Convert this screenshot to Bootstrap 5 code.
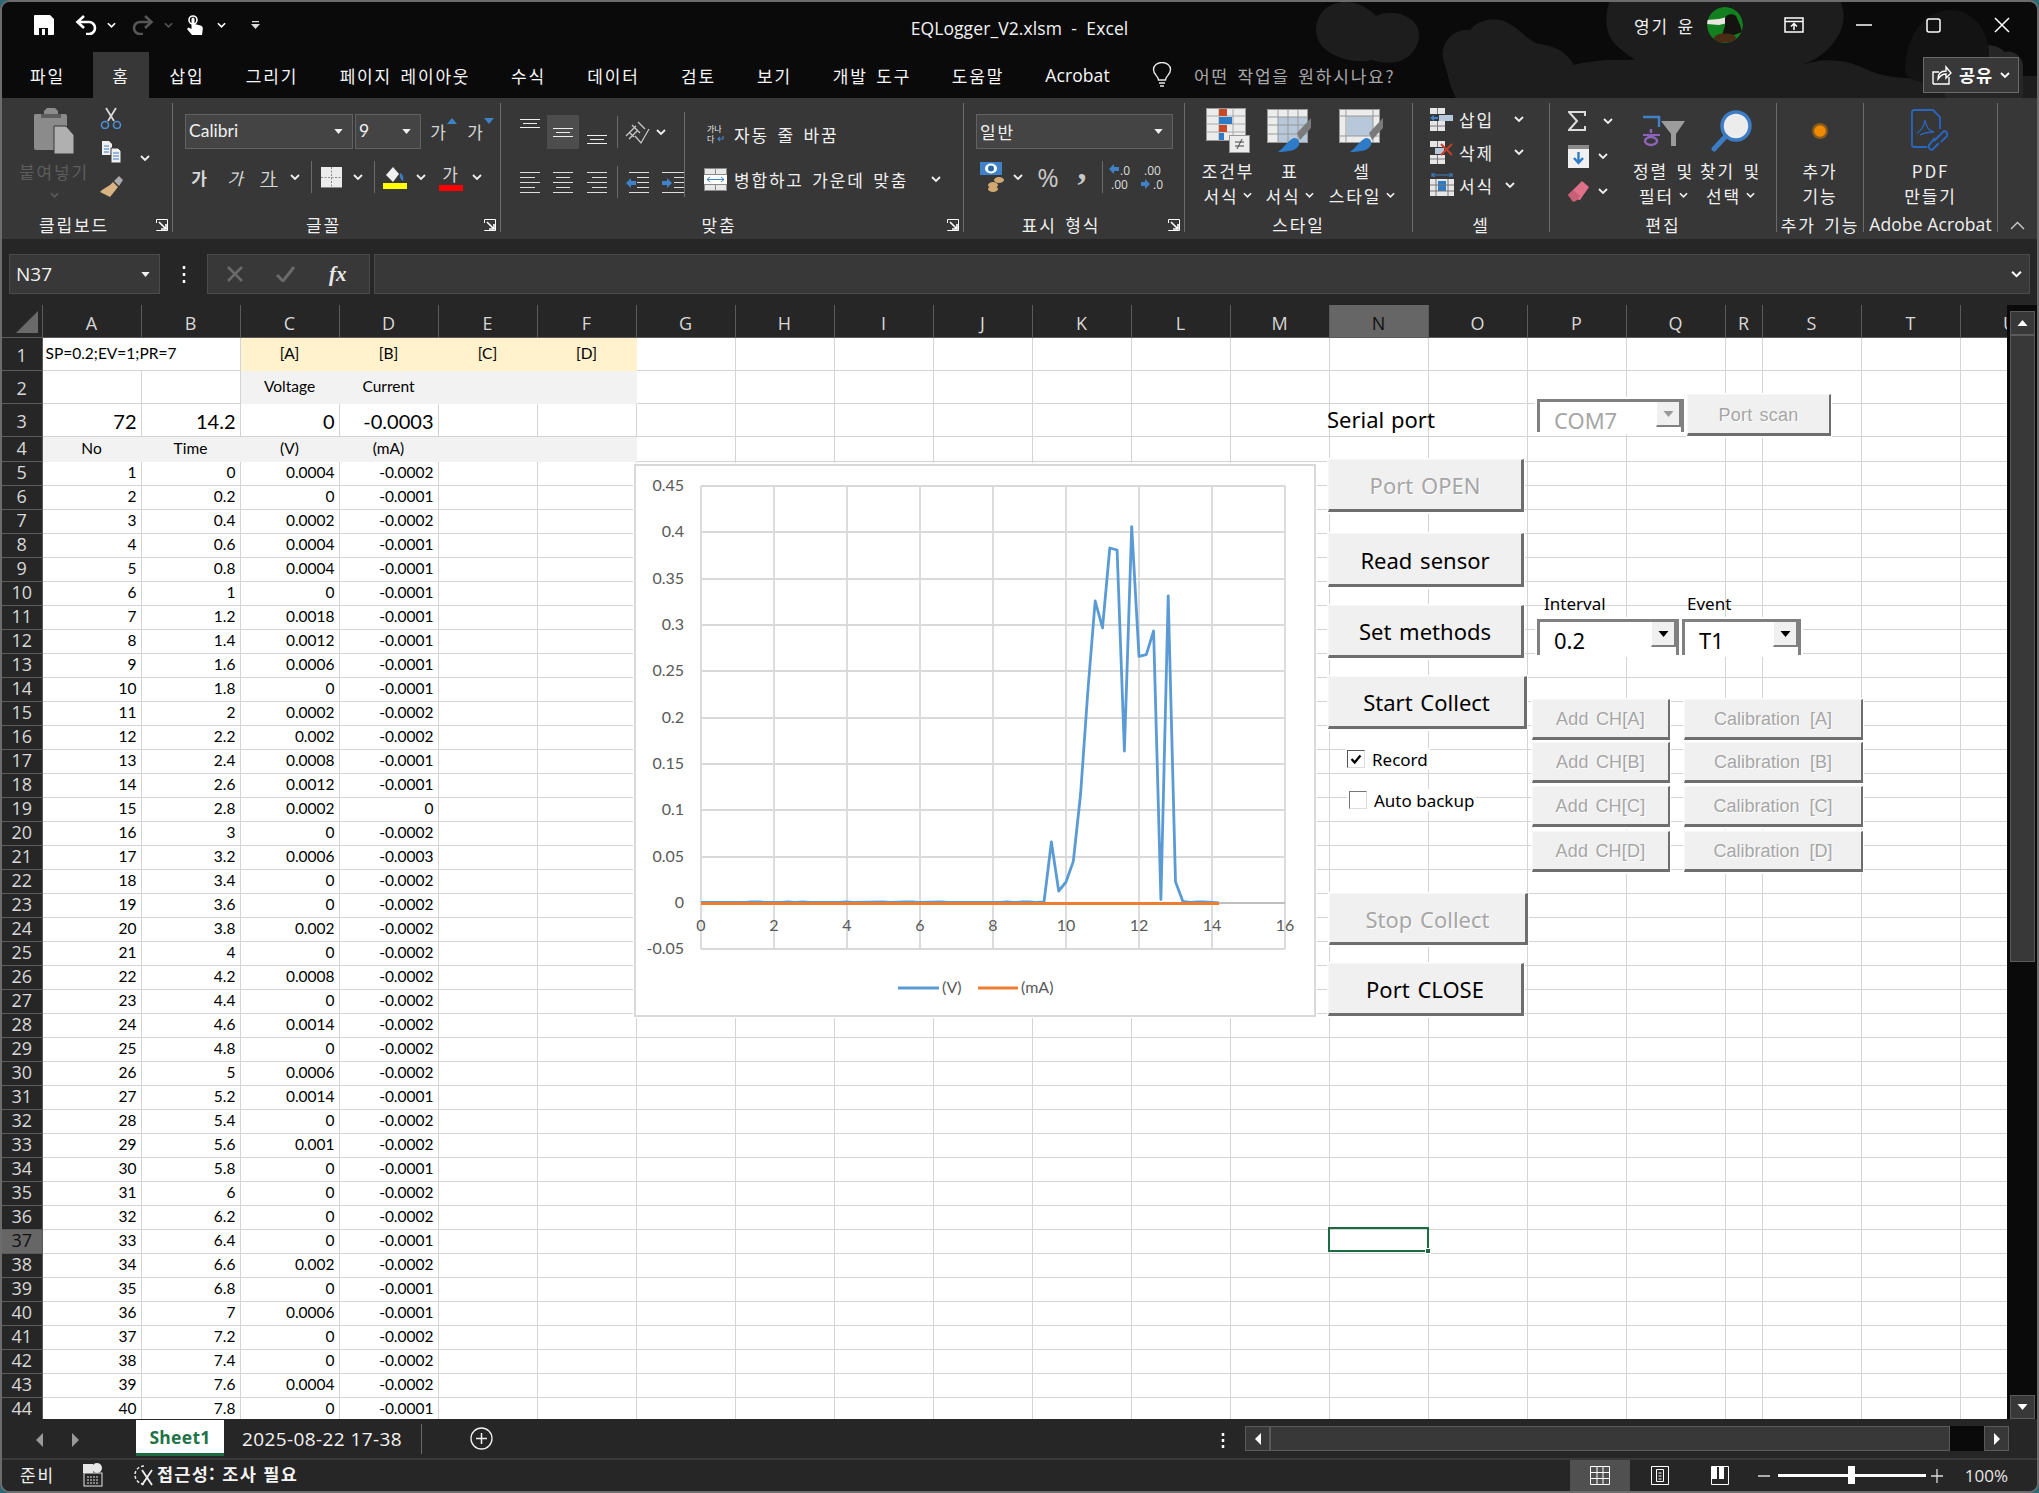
<!DOCTYPE html>
<html lang="ko">
<head>
<meta charset="utf-8">
<title>EQLogger_V2.xlsm - Excel</title>
<link href="https://cdn.jsdelivr.net/npm/bootstrap@5.3.0/dist/css/bootstrap.min.css" rel="stylesheet">
<style>
html,body{height:100%;margin:0;overflow:hidden;background:#2d6a78}
body{font-family:"Open Sans","Noto Sans CJK KR",sans-serif;color:#f0f0f0}
.app{width:2039px;height:1493px;border:2px solid #6c6c6c;border-radius:10px;overflow:hidden;background:#262626;display:flex;flex-direction:column}
.k{font-family:"Noto Sans CJK KR","Noto Sans",sans-serif;font-size:17px;letter-spacing:1.8px;word-spacing:2px;line-height:25px;white-space:nowrap}
.top{position:relative;background:#0a0a0a;height:96px;flex:none}
.blobs{position:absolute;left:-2px;top:-2px}
.tbar{position:relative;height:50px;display:grid;grid-template-columns:1fr auto 1fr;align-items:center}
.qat{display:grid;grid-template-columns:31px 11px 32px 18px 2px 42px 8px 46px 6px 62px;align-items:center;justify-items:center;height:50px;padding:0 0 4px 26px;justify-self:start}
.title{font-size:17.6px;color:#f2f2f2;line-height:1;padding-top:4px;letter-spacing:.1px}
.tright{display:grid;grid-template-columns:auto 60px 78px 62px 76px 62px;justify-items:center;align-items:center;justify-self:end;padding-bottom:4px;margin-right:4px}
.avatar{border-radius:50%}
.tabsrow{position:relative;height:46px;display:flex;align-items:stretch}
.tabs{display:grid;grid-template-columns:91px 56px 76px 94px 172px 75px 95px 75px 77px 118px 94px 105px}
.tabs .tab{display:flex;align-items:center;justify-content:center;color:#f6f6f6;text-decoration:none;padding-bottom:0}
.tabs .tab.active{background:#373737}
.tab.lat,.lat{font-family:"Open Sans",sans-serif;font-size:17.5px;letter-spacing:.1px}
.bulb{margin-left:22px;display:flex;align-items:center}
.tell{margin-left:22px;color:#a8a8a8;display:flex;align-items:center}
.share{position:absolute;left:1921px;top:5px;width:96px;height:36px;background:#383838;border:1px solid #6a6a6a;color:#fff;display:flex;align-items:center;justify-content:center;gap:7px;padding:0;border-radius:0}
.share b{font-family:"Noto Sans CJK KR",sans-serif;font-size:17.5px;font-weight:700;letter-spacing:1px;color:#fff}
.ribbon{height:141px;background:#373737;padding:5px 0 7px;display:flex;flex:none}
.rg{display:flex;flex-direction:column;height:129px;border-right:1px solid #6b6b6b;flex:none;position:relative}
.rb{height:114px;display:flex;flex:none}
.rc{height:15px;text-align:center;display:flex;justify-content:center;align-items:center;position:relative;color:#f0f0f0;white-space:nowrap}
.rc.hl{padding-right:26px}
.launch{position:absolute;right:4px;top:2px}
.g-clip{width:171px}.g-font{width:328px}.g-align{width:463px}.g-num{width:221px}.g-style{width:228px}.g-cell{width:137px}.g-edit{width:227px}.g-add{width:87px}.g-acr{width:134px}
.paste{width:88px;padding-left:8px;display:flex;flex-direction:column;align-items:center;padding-top:5px;box-sizing:content-box;color:#5d5d5d}
.paste .k{margin-top:5px}
.clipsm{width:26px;display:flex;flex-direction:column;align-items:center;padding-top:4px;gap:12px}
.fbox{height:35px;background:#444;border:1px solid #626262;display:flex;align-items:center;justify-content:space-between;padding:0 9px 0 3px;color:#f0f0f0}
.cal{font-family:Lato,sans-serif;font-size:17.5px}
.frow1{display:grid;grid-template-columns:168px 2px 66px 7px 22px 15px 22px;padding:11px 0 0 12px;align-items:center;justify-items:stretch}
.frow2{display:grid;grid-template-columns:36px 36px 30px 22px 10px 30px 24px 8px 34px 18px 42px 10px;padding:12px 0 0 9px;align-items:center;justify-items:center;height:42px}
.vs{width:1px;background:#6b6b6b;height:32px}
.ga{position:relative;color:#d6d6d6;text-align:center}
.ga svg{position:absolute;right:-7px;top:-1px}
.colb{display:flex;flex-direction:column}
.al-l{width:183px;padding:12px 0 0 11px;flex:none}
.arow1{display:grid;grid-template-columns:35px 32px 36px 4px 36px 12px;height:34px;align-items:center;justify-items:center}
.arow2{display:grid;grid-template-columns:35px 32px 36px 4px 36px 36px;height:34px;align-items:center;justify-items:center;margin-top:16px}
.sel-al{background:#4d4d4d;width:32px;height:34px;display:flex;align-items:center;justify-content:center;padding-top:2px}
.vlong{width:1px;height:85px;background:#6b6b6b;margin-top:9px;flex:none}
.al-r{padding:19px 0 0 19px;flex:1}
.wrap1{display:flex;align-items:center;gap:7px;height:24px;padding-left:3px}
.wrap2{display:flex;align-items:center;gap:7px;height:28px;margin-top:19px}
.numbox{margin:11px 0 0 12px;width:197px}
.nrow{display:grid;grid-template-columns:32px 20px 40px 28px 12px 32px 32px;padding:12px 0 0 12px;align-items:center;justify-items:center;height:44px}
.pct{font-size:26px;color:#c8c8c8;line-height:1}
.cma{font-family:"Liberation Serif",serif;font-weight:700;font-size:36px;color:#c8c8c8;line-height:0;padding-bottom:20px}
.big{display:flex;flex-direction:column;align-items:center;flex:none}
.big .ic{height:55px;display:flex;align-items:center;justify-content:center}
.big .k{display:flex;align-items:center;justify-content:center;gap:5px}
.c62{width:62px}.c82{width:82px}.c67{width:67px}
.pl12{padding-left:12px}
.cellcol{padding:0 0 0 17px;width:100%}
.crow{display:flex;align-items:center;height:33px;gap:5px}
.crow .ch{margin-left:auto;margin-right:25px}
.crow .ch2{margin-left:6px}
.edcol{width:68px;padding-left:6px;display:flex;flex-direction:column;gap:9px;padding-top:5px}
.edr{display:flex;align-items:center;gap:9px;height:26px}
.col-fill{flex:1;display:flex;align-items:flex-end;justify-content:center;padding-bottom:2px}
.fbar{height:66px;background:#262626;padding-top:15px;display:flex;flex:none}
.namebox{width:151px;height:40px;margin-left:7px;background:#383838;border:1px solid #4a4a4a;display:flex;align-items:center;justify-content:space-between;padding:0 9px 0 6px;font-size:19px;color:#f0f0f0}
.vdots{width:47px;display:flex;align-items:center;justify-content:center;height:40px}
.fxbox{width:163px;height:40px;background:#383838;border:1px solid #4a4a4a;display:flex;align-items:center;padding-left:19px;gap:33px}
.fx{font-family:"Liberation Serif",serif;font-style:italic;font-weight:700;font-size:21px;color:#e8e8e8;line-height:1}
.finput{width:1656px;height:40px;margin-left:4px;background:#383838;border:1px solid #4a4a4a;display:flex;align-items:center;justify-content:flex-end;padding-right:7px}
.sarea{display:flex;height:1114px;flex:none}
.sheetwrap{position:relative;width:2005px;height:1114px;overflow:hidden;background:#fff;flex:none}
.vscroll{width:30px;display:flex;flex-direction:column;align-items:center;background:#0a0a0a;padding-top:6px;flex:none}
.vb{width:25px;height:24px;background:#383838;border:1px solid #5a5a5a;display:flex;align-items:center;justify-content:center;flex:none}
.vthumb{width:25px;height:627px;background:#383838;border:1px solid #5a5a5a;flex:none}
.vsp{flex:1}
.sheet{table-layout:fixed;border-collapse:collapse;width:2057px;font-family:Lato,sans-serif;font-size:15.5px;color:#000}
.sheet td{border-right:1px solid #d4d4d4;border-bottom:1px solid #d4d4d4;padding:0 4px;white-space:nowrap;overflow:hidden;background:#fff;line-height:1;text-align:right}
.sheet th{background:#262626;color:#d8d8d8;font-family:"Open Sans",sans-serif;font-weight:400;font-size:18px;text-align:center;padding:0;border-bottom:1px solid #5a5a5a;border-right:1px solid #5a5a5a;line-height:1.2}
.sheet thead th{height:32px;padding-top:6px;border-right:1px solid #5a5a5a}
.sheet thead th.sel,.sheet tbody th.sel{background:#666;color:#111}
.sheet thead th:first-child{padding:0;vertical-align:bottom;text-align:right}
.sheet .h33{height:33px}.sheet .h25{height:25px}.sheet .h24{height:24px}
.sheet .h33 th{padding-top:4px}
.sheet td.l{text-align:left;padding-left:3px}
.sheet td.c{text-align:center}
.sheet td.y{background:#fff2cc;border-color:#fff2cc}
.sheet td.g{background:#f2f2f2;border-color:#f2f2f2}
.sheet td.big3{font-size:20px;vertical-align:bottom;padding-bottom:5px}
.canvas{position:absolute;left:-2px;top:-305px;width:0;height:0}
.chart{position:absolute;left:634px;top:464px;width:682px;height:553px;background:#fff;border:2px solid #d9d9d9;box-sizing:border-box;box-shadow:0 0 0 1px #fff}
.chart svg{position:absolute;left:-2px;top:-2px;font-family:Lato,sans-serif}
.xb{position:absolute;display:flex;align-items:center;justify-content:center;border-radius:0;padding:1px 0 0;background:#f0f0f0;border:0;border-right:3px solid #6e6e6e;border-bottom:3px solid #6e6e6e;border-top:1px solid #f7f7f7;border-left:1px solid #f7f7f7;box-shadow:-1px 3px 0 -1px #fff,0 0 0 1px #fff;font-family:"Noto Sans",sans-serif;color:#000;line-height:1;white-space:nowrap;word-spacing:2px;opacity:1!important}
.xb.lg{font-size:22px}
.xb.sm{font-family:"Liberation Sans",sans-serif;font-size:18px;letter-spacing:.2px;color:#a6a6a6;text-shadow:1px 1px 0 #fff;border-right-width:2px;border-bottom-width:3px}
.xb.off{color:#a6a6a6;text-shadow:1px 1px 0 #fff}
.b-open{left:1328px;top:459px;width:196px;height:53px}
.b-read{left:1328px;top:533px;width:196px;height:54px}
.b-set{left:1328px;top:605px;width:196px;height:53px}
.b-start{left:1328px;top:676px;width:199px;height:53px}
.b-stop{left:1329px;top:893px;width:199px;height:52px}
.b-close{left:1328px;top:963px;width:196px;height:53px}
.b-scan{left:1687px;top:394px;width:144px;height:42px}
.addc{left:1532px;width:138px;height:41px}
.xb.calc{left:1684px;width:179px;height:41px;letter-spacing:0;word-spacing:5px}
.r1{top:699px}.r2{top:742px}.r3{top:786px}.r4{top:831px}
.lbl{position:absolute;font-family:"Noto Sans",sans-serif;color:#000;white-space:nowrap;line-height:1}
.l-serial{left:1327px;top:408px;font-size:22px;word-spacing:1px}
.l-int{left:1544px;top:595px;font-size:17px}
.l-evt{left:1687px;top:595px;font-size:17px}
.combo{position:absolute;background:#fff;color:#000;border:3px solid #808080;border-bottom:0;display:flex;justify-content:space-between;font-family:"Noto Sans",sans-serif;font-size:22px;line-height:1;box-shadow:0 0 0 2px #fff}
.combo span{padding:7px 0 0 14px}
.combo i{display:flex;align-items:center;justify-content:center;width:25px;height:25px;background:#f0f0f0;border-right:2px solid #808080;border-bottom:2px solid #808080;border-left:1px solid #fff;flex:none}
.combo.c-com{left:1537px;top:399px;width:147px;height:33px;color:#a6a6a6}
.c-int{left:1537px;top:619px;width:142px;height:36px}
.c-evt{left:1682px;top:619px;width:119px;height:36px}
.ck{position:absolute;display:flex;align-items:center;gap:7px;font-family:"Noto Sans",sans-serif;font-size:17px;color:#000;line-height:1;white-space:nowrap;background:#fff;box-shadow:0 0 0 2px #fff;margin:0;padding:0}
.ck .form-check-input{width:18px;height:18px;margin:0;border-radius:0;border:1px solid #777;border-right-color:#ddd;border-bottom-color:#ddd;float:none;flex:none;background-color:#fff}
.ck .form-check-input:checked{background-color:#fff;border-color:#555 #ddd #ddd #555;background-image:url("data:image/svg+xml,%3csvg xmlns='http://www.w3.org/2000/svg' viewBox='0 0 18 18'%3e%3cpath d='M4 9l3.5 4L14 5' fill='none' stroke='%23000' stroke-width='2.6'/%3e%3c/svg%3e");background-size:100%}
.ck-rec{left:1347px;top:750px}
.ck-auto{left:1349px;top:791px}
.selbox{position:absolute;left:1328px;top:1227px;width:101px;height:25px;border:2px solid #1d6b43}
.selbox::after{content:"";position:absolute;right:-4px;bottom:-4px;width:6px;height:6px;background:#1d6b43;border:1px solid #fff}
.tabbar{height:39px;display:flex;align-items:flex-start;background:#262626;border-top:1px solid #262626;flex:none;position:relative}
.tnav{width:134px;display:grid;grid-template-columns:36px 37px;padding:13px 0 0 19px;justify-items:center}
.stab{width:88px;height:36px;background:#fff;border-bottom:3px solid #1d6b43;color:#217346;font-family:"Open Sans",sans-serif;font-weight:700;font-size:17.5px;display:flex;align-items:center;justify-content:center;letter-spacing:.3px;padding-top:2px}
.stab2{font-size:19px;padding:1px 0 0 18px;color:#f4f4f4;font-family:"Open Sans",sans-serif;white-space:nowrap;letter-spacing:.4px;width:198px;border-right:1px solid #6a6a6a;height:30px;margin-top:4px}
.plus{margin-left:48px;margin-top:7px}
.tdots{position:absolute;left:1219px;top:13px}
.hsc{position:absolute;left:1243px;top:6px;display:flex;height:25px}
.hb{width:25px;background:#383838;border:1px solid #5a5a5a;display:flex;align-items:center;justify-content:center}
.hthumb{width:680px;background:#383838;border:1px solid #5a5a5a}
.hblack{width:34px;background:#0a0a0a}
.status{flex:1;display:flex;align-items:stretch;background:#262626;border-top:2px solid #3a3a3a;position:relative}
.st-l{display:flex;align-items:center;padding-left:18px;padding-bottom:2px}
.st-l .acc{font-family:"Noto Sans CJK KR",sans-serif;font-weight:700;font-size:17.5px;letter-spacing:1.3px;color:#f4f4f4;margin-left:3px;white-space:nowrap}
.mac{margin:0 31px 0 28px}
.st-r{margin-left:auto;display:flex;align-items:center}
.vbtn{width:60px;height:100%;display:flex;align-items:center;justify-content:center}
.vbtn.on{background:#505050}
.zoom{display:flex;align-items:center;position:relative}
.zline{width:148px;height:3px;background:#fff;margin:0 5px 0 8px;position:relative}
.zline::after{content:"";position:absolute;left:70px;top:-8px;width:7px;height:18px;background:#fff}
.zpct{font-size:17px;color:#e6e6e6;margin:0 29px 0 22px}
</style>
</head>
<body>
<svg width="0" height="0" class="position-absolute">
<defs>
<symbol id="chev" viewBox="0 0 10 7"><path d="M1 1l4 4 4-4" fill="none" stroke="currentColor" stroke-width="1.8"/></symbol>
<symbol id="launch" viewBox="0 0 12 12"><path d="M.5.5h11v11H.5z" fill="none" stroke="#fff"/><path d="M0 0h7v3H3v8H0z" fill="#373737"/><path d="M.5 4V.5H7" fill="none" stroke="#fff"/><path d="M3 3l7 7M10 5v5H5" fill="none" stroke="#fff" stroke-width="1.6"/></symbol>
<symbol id="caret" viewBox="0 0 10 6"><path d="M0 0h10L5 6z" fill="currentColor"/></symbol>
</defs>
</svg>
<div class="app">
  <div class="top">
    <svg class="blobs" width="2039" height="98" viewBox="0 0 2039 98">
      <g fill="#1d1d1d">
        <path d="M1316 30c0-18 14-28 30-28 12 0 22 6 30 14 12-6 28-4 38 6 10 12 4 28-8 36-10 6-22 6-34 2-8 2-20 2-30-2-14-4-26-14-26-28z"/>
        <path d="M1444 62c-6-16 8-34 26-32 8-10 24-14 36-8 14 6 22 20 34 22 14 2 28 8 34 22 6 14 0 30-6 32h-112c-6-10-8-24-12-36z"/>
        <path d="M1518 78c40-8 80-24 120-16-10-8-26-16-30-30-4-14 0-26 2-32h230c6 14 4 26-2 36-8 14-22 24-34 28 16 10 10 22-8 22-20 2-34-6-50-4-16 0-34 12-228 16z"/>
        <path d="M1518 80c50-14 110-26 150-18 40 8 80 22 130 4 30-10 50-6 70 4 30 14 70 6 170 6v22H1518z"/>
        <path d="M1945 74c0-16 14-26 28-24 8-8 24-6 32 2 8-2 16 4 18 12v34h-78z" fill="#262626"/>
      </g>
      <path d="M1905 70c0-34 20-60 46-60 24 0 38 24 38 44 0 18-20 30-44 30s-40-4-40-14z" fill="#131313"/>
    </svg>
    <div class="tbar">
      <div class="qat">
        <svg width="20" height="20" viewBox="0 0 20 20"><path d="M0 1a1 1 0 0 1 1-1h15l4 4v15a1 1 0 0 1-1 1H1a1 1 0 0 1-1-1z" fill="#fff"/><path d="M5 13h9v7H5z" fill="#0a0a0a"/><path d="M8 14h3v6H8z" fill="#fff"/></svg>
        <span></span>
        <svg width="22" height="20" viewBox="0 0 22 20"><path d="M3 7h11a6 6 0 0 1 0 12h-3" fill="none" stroke="#fff" stroke-width="2.6"/><path d="M9 1L2.5 7 9 13" fill="none" stroke="#fff" stroke-width="2.6"/></svg>
        <svg width="9" height="7" class="text-white"><use href="#chev"/></svg>
        <span></span>
        <svg width="22" height="20" viewBox="0 0 22 20"><path d="M19 7H8a6 6 0 0 0 0 12h3" fill="none" stroke="#555" stroke-width="2.6"/><path d="M13 1l6.5 6L13 13" fill="none" stroke="#555" stroke-width="2.6"/></svg>
        <svg width="9" height="7" style="color:#555"><use href="#chev"/></svg>
        <svg width="18" height="21" viewBox="0 0 18 21"><circle cx="7" cy="5" r="4" fill="none" stroke="#fff" stroke-width="1.6"/><path d="M5.5 4a1.5 1.5 0 0 1 3 0v5l6 1.5c2 .5 2.500 2 2.300 3.500L16 20H6L1 14l1.500-1.500L5.500 14z" fill="#fff"/></svg>
        <svg width="9" height="7" class="text-white"><use href="#chev"/></svg>
        <svg width="9" height="9" viewBox="0 0 9 9"><path d="M1 0h7v1.300H1z" fill="#ddd"/><path d="M0 3h9L4.500 8z" fill="#ddd"/></svg>
      </div>
      <div class="title lat">EQLogger_V2.xlsm&nbsp; -&nbsp; Excel</div>
      <div class="tright">
        <span class="k">영기 윤</span>
        <svg class="avatar" width="36" height="36" viewBox="0 0 36 36"><circle cx="18" cy="18" r="18" fill="#12801f"/><path d="M0 13l12-1 12-3 1 6-13 3-12-1z" fill="#e8e6de"/><path d="M18 11c1-4 8-5 11-2l4 9 2 7-8 3-12 0 3-9z" fill="#15130f"/><ellipse cx="18" cy="31" rx="11" ry="4.500" fill="#4a2c14"/></svg>
        <svg width="20" height="16" viewBox="0 0 20 16"><path d="M1 1h18v14H1zM1 4.500h18" fill="none" stroke="#fff" stroke-width="1.500"/><path d="M10 13V7M7 9.500l3-3 3 3" fill="none" stroke="#fff" stroke-width="1.500"/></svg>
        <svg width="16" height="2"><path d="M0 1h16" stroke="#fff" stroke-width="1.500"/></svg>
        <svg width="15" height="15"><rect x="1" y="1" width="13" height="13" rx="2" fill="none" stroke="#fff" stroke-width="1.500"/></svg>
        <svg width="16" height="16"><path d="M1 1l14 14M15 1L1 15" stroke="#fff" stroke-width="1.500"/></svg>
      </div>
    </div>
    <div class="tabsrow">
      <nav class="tabs nav">
        <a class="tab k" href="#">파일</a><a class="tab k active" href="#">홈</a><a class="tab k" href="#">삽입</a><a class="tab k" href="#">그리기</a><a class="tab k" href="#">페이지 레이아웃</a><a class="tab k" href="#">수식</a><a class="tab k" href="#">데이터</a><a class="tab k" href="#">검토</a><a class="tab k" href="#">보기</a><a class="tab k" href="#">개발 도구</a><a class="tab k" href="#">도움말</a><a class="tab lat" href="#">Acrobat</a>
      </nav>
      <div class="bulb"><svg width="20" height="26" viewBox="0 0 20 26"><path d="M6.500 18c0-4-5-5-5-10.500a8.500 7 0 0 1 17 0C18.500 13 13.500 14 13.500 18z" fill="none" stroke="#e8e8e8" stroke-width="1.400"/><path d="M7 21h6M8 24h4" stroke="#e8e8e8" stroke-width="1.600"/></svg></div>
      <div class="tell k">어떤 작업을 원하시나요?</div>
      <button class="share btn" type="button"><svg width="20" height="20" viewBox="0 0 20 20"><path d="M1 19V7h6M17 12v7H1" fill="none" stroke="#fff" stroke-width="1.400"/><path d="M6 14c0-5 3-8 8-8V2l5 6-5 5V9c-4 0-6 2-8 5z" fill="none" stroke="#fff" stroke-width="1.400"/></svg><b>공유</b><svg width="10" height="7"><use href="#chev"/></svg></button>
    </div>
  </div>

  <div class="ribbon">
    <div class="rg g-clip">
      <div class="rb">
        <div class="paste">
          <svg width="42" height="46" viewBox="0 0 42 46"><path d="M1 6h10V3l3-3h8l3 3v3h7a2 2 0 0 1 2 2v32a2 2 0 0 1-2 2H3a2 2 0 0 1-2-2V8a2 2 0 0 1 1-2z" fill="#8b8b8b"/><path d="M8 6h20v4H8z" fill="#5e5e5e"/><path d="M21 18h12l8 9v19H21z" fill="#b0b0b0" stroke="#373737" stroke-width="1"/></svg>
          <span class="k">붙여넣기</span>
          <svg width="9" height="7" class="mt-2"><use href="#chev"/></svg>
        </div>
        <div class="clipsm">
          <svg width="22" height="22" viewBox="0 0 22 22"><path d="M6 1l8 13M16 1L8 14" stroke="#d8d8d8" stroke-width="1.800" fill="none"/><circle cx="5" cy="18" r="3.500" fill="none" stroke="#4a8fd8" stroke-width="1.600"/><circle cx="17" cy="18" r="3.500" fill="none" stroke="#4a8fd8" stroke-width="1.600"/></svg>
          <svg width="21" height="23" viewBox="0 0 21 23"><path d="M1 0h7l3 3v11H1z" fill="#f0f0f0"/><path d="M10 7h7l3 3v12H10z" fill="#f0f0f0" stroke="#373737"/><path d="M3 5h5M3 8h5M3 11h5" stroke="#3a7cc2" stroke-width="1"/><path d="M12 12h6M12 15h6M12 18h6" stroke="#3a7cc2" stroke-width="1"/></svg>
          <svg width="24" height="21" viewBox="0 0 24 21"><path d="M14 6l5 5-8 10L1 16l2-2 8-5z" fill="#d9b482"/><path d="M15 5l5-5 4 4-4 6z" fill="#aaa"/></svg>
        </div>
        <div class="d-flex align-items-start pt-5 ms-3"><svg width="10" height="7" class="mt-1"><use href="#chev"/></svg></div>
      </div>
      <div class="rc hl k"><span>클립보드</span><svg class="launch" width="12" height="12"><use href="#launch"/></svg></div>
    </div>

    <div class="rg g-font">
      <div class="rb colb">
        <div class="frow1">
          <div class="fbox"><span class="cal">Calibri</span><svg width="9" height="5"><use href="#caret"/></svg></div><span></span>
          <div class="fbox"><span class="cal">9</span><svg width="9" height="5"><use href="#caret"/></svg></div><span></span>
          <span class="k ga">가<svg width="10" height="6"><path d="M0 6l5-6 5 6z" fill="#3f82c8"/></svg></span><span></span>
          <span class="k ga">가<svg width="10" height="6"><path d="M0 0l5 6 5-6z" fill="#3f82c8"/></svg></span>
        </div>
        <div class="frow2">
          <span class="k ga fw-bold">가</span><span class="k ga fst-italic">가</span><span class="k ga"><u>가</u></span>
          <svg width="10" height="7"><use href="#chev"/></svg><span class="vs"></span>
          <svg width="21" height="21" viewBox="0 0 21 21"><rect width="21" height="21" fill="#ececec"/><path d="M10.500 0v21M0 10.500h21" stroke="#8a8a8a" stroke-dasharray="2 1.500"/><path d="M0 20.500h21" stroke="#888"/></svg>
          <svg width="10" height="7"><use href="#chev"/></svg><span class="vs"></span>
          <svg width="24" height="24" viewBox="0 0 24 24"><path d="M10 2L3 10l7 7 6-8z" fill="#f0f0f0"/><path d="M17 8c3 1 4 5 3 8-2-1-4-4-3-8z" fill="#3a7cc2"/><rect y="18" width="24" height="6" fill="#ffff00"/></svg>
          <svg width="10" height="7"><use href="#chev"/></svg>
          <span class="d-flex flex-column align-items-center"><span class="k ga lh-sm">가</span><svg width="24" height="6"><rect width="24" height="6" fill="#ff0000"/></svg></span>
          <svg width="10" height="7"><use href="#chev"/></svg>
        </div>
      </div>
      <div class="rc hl k"><span>글꼴</span><svg class="launch" width="12" height="12"><use href="#launch"/></svg></div>
    </div>

    <div class="rg g-align">
      <div class="rb">
        <div class="al-l">
          <div class="arow1">
            <svg class="align-self-start mt-1" width="20" height="10"><path d="M0 .5h20M3 4.500h14M0 8.500h20" stroke="#ededed"/></svg>
            <span class="sel-al"><svg width="20" height="10"><path d="M0 .5h20M3 4.500h14M0 8.500h20" stroke="#ededed"/></svg></span>
            <svg class="align-self-end mb-1" width="20" height="10"><path d="M0 .5h20M3 4.500h14M0 8.500h20" stroke="#ededed"/></svg>
            <span class="vs"></span>
            <svg width="26" height="26" viewBox="0 0 26 26"><path d="M2 17l10-10M5 20l9-9M8 6l8 8M14 3l7 7M5 13l5 5M11 17l6 7 8-14" fill="none" stroke="#c8c8c8" stroke-width="1.300"/></svg>
            <svg width="10" height="7"><use href="#chev"/></svg>
          </div>
          <div class="arow2">
            <svg width="20" height="21"><path d="M0 .5h20M0 5.500h15M0 10.500h20M0 15.500h15M0 20.500h20" stroke="#dedede"/></svg>
            <svg width="20" height="21"><path d="M0 .5h20M3 5.500h14M0 10.500h20M3 15.500h14M0 20.500h20" stroke="#dedede"/></svg>
            <svg width="20" height="21"><path d="M0 .5h20M5 5.500h15M0 10.500h20M5 15.500h15M0 20.500h20" stroke="#dedede"/></svg>
            <span class="vs"></span>
            <svg width="23" height="21"><path d="M3 .5h20M11 5.500h12M11 10.500h12M11 15.500h12M3 20.500h20" stroke="#dedede"/><path d="M0 11l5-5v3h5v4H5v3z" fill="#3f82c8"/></svg>
            <svg width="23" height="21"><path d="M0 .5h22M12 5.500h11M12 10.500h11M12 15.500h11M0 20.500h22" stroke="#dedede"/><path d="M10 11L5 6v3H0v4h5v3z" fill="#3f82c8"/></svg>
          </div>
        </div>
        <div class="vlong"></div>
        <div class="al-r">
          <div class="wrap1">
            <svg width="20" height="20" viewBox="0 0 20 20" overflow="visible"><text x="0" y="8" font-size="8" fill="#eee" font-family="Noto Sans CJK KR">가나</text><text x="0" y="18" font-size="8" fill="#eee" font-family="Noto Sans CJK KR">다</text><path d="M16 12v3h-5M13 13l-2 2 2 2" fill="none" stroke="#3f82c8" stroke-width="1.200"/></svg>
            <span class="k">자동 줄 바꿈</span>
          </div>
          <div class="wrap2">
            <svg width="23" height="23" viewBox="0 0 23 23"><rect x=".5" y=".5" width="22" height="22" fill="#e8e8e8" stroke="#8a8a8a"/><path d="M0 6.500h23M0 16.500h23M11.500 0v6M11.500 17v6" stroke="#8a8a8a"/><rect y="7" width="23" height="9" fill="#fff"/><path d="M3 11.500h17M6 9l-3 2.500L6 14M17 9l3 2.500L17 14" fill="none" stroke="#3f82c8"/></svg>
            <span class="k">병합하고 가운데 맞춤</span>
            <svg class="ms-3" width="10" height="7"><use href="#chev"/></svg>
          </div>
        </div>
      </div>
      <div class="rc hl k"><span>맞춤</span><svg class="launch" width="12" height="12"><use href="#launch"/></svg></div>
    </div>

    <div class="rg g-num">
      <div class="rb colb">
        <div class="fbox numbox"><span class="k">일반</span><svg width="9" height="5"><use href="#caret"/></svg></div>
        <div class="nrow">
          <svg width="24" height="30" viewBox="0 0 24 30"><rect width="22" height="13" fill="#3f82c8"/><ellipse cx="11" cy="6.500" rx="6" ry="5" fill="#fff"/><circle cx="11" cy="6.500" r="3" fill="#2a68a8"/><g fill="#d0a870"><ellipse cx="19" cy="18" rx="5" ry="3"/><ellipse cx="13" cy="23" rx="5" ry="3"/><ellipse cx="13" cy="27" rx="5" ry="3"/></g></svg>
          <svg width="10" height="7"><use href="#chev"/></svg>
          <span class="pct">%</span>
          <span class="cma">,</span>
          <span class="vs"></span>
          <svg width="30" height="28" viewBox="0 0 30 28" overflow="visible" font-family="Open Sans" font-size="12" fill="#ddd"><path d="M0 6l5-5v3h5v4H5v3z" fill="#3f82c8"/><text x="11" y="12">.0</text><text x="2" y="26">.00</text></svg>
          <svg width="30" height="28" viewBox="0 0 30 28" overflow="visible" font-family="Open Sans" font-size="12" fill="#ddd"><text x="3" y="12">.00</text><path d="M9 21l-5-5v3H0v4h4v3z" fill="#3f82c8"/><text x="12" y="26">.0</text></svg>
        </div>
      </div>
      <div class="rc hl k"><span>표시 형식</span><svg class="launch" width="12" height="12"><use href="#launch"/></svg></div>
    </div>

    <div class="rg g-style">
      <div class="rb pl12">
        <div class="big c62">
          <div class="ic"><svg width="44" height="46" viewBox="0 0 44 46"><rect x=".5" y=".5" width="39" height="32" fill="#ececec" stroke="#999"/><path d="M13 0v33M27 0v33M0 8h40M0 16h40M0 24h40" stroke="#aaa"/><rect x="13" y="1" width="8" height="7" fill="#c8492a"/><rect x="13" y="9" width="13" height="7" fill="#2e7cc8"/><rect x="13" y="17" width="8" height="7" fill="#c8492a"/><rect x="13" y="25" width="5" height="7" fill="#2e7cc8"/><rect x="23.500" y="27.500" width="20" height="17" fill="#ececec" stroke="#999"/><path d="M29 34h9M29 38h9M36 31l-5 10" stroke="#444" fill="none"/></svg></div>
          <div class="k">조건부</div><div class="k">서식<svg width="9" height="7"><use href="#chev"/></svg></div>
        </div>
        <div class="big c62">
          <div class="ic"><svg width="46" height="44" viewBox="0 0 46 44"><rect x=".5" y=".5" width="40" height="33" fill="#ececec" stroke="#999"/><rect x="11" y="8" width="29" height="25" fill="#b6c8da"/><path d="M11 0v33M21 0v33M31 0v33M0 8h40M0 16h40M0 25h40" stroke="#999"/><path d="M30 24l14-15v10L33 31z" fill="#7a7a7a"/><path d="M11 43c6-4 10-12 16-14 4 0 6 3 5 7-2 5-10 7-21 7z" fill="#2e7cc8"/></svg></div>
          <div class="k">표</div><div class="k">서식<svg width="9" height="7"><use href="#chev"/></svg></div>
        </div>
        <div class="big c82">
          <div class="ic"><svg width="46" height="44" viewBox="0 0 46 44"><rect x=".5" y=".5" width="40" height="33" fill="#ececec" stroke="#999"/><rect x="8" y="7" width="26" height="20" fill="#b6c8da"/><path d="M7 0v33M34 0v33M0 7h40M0 27h40" stroke="#999"/><path d="M30 24l14-15v10L33 31z" fill="#7a7a7a"/><path d="M11 43c6-4 10-12 16-14 4 0 6 3 5 7-2 5-10 7-21 7z" fill="#2e7cc8"/></svg></div>
          <div class="k">셀</div><div class="k">스타일<svg width="9" height="7"><use href="#chev"/></svg></div>
        </div>
      </div>
      <div class="rc k"><span>스타일</span></div>
    </div>

    <div class="rg g-cell">
      <div class="rb">
        <div class="cellcol">
          <div class="crow"><svg width="24" height="23" viewBox="0 0 24 23"><path d="M0 0h15v6H0zM0 13h15v10H0z" fill="#e6e6e6"/><path d="M7.500 0v6M7.500 13v10M0 18h15" stroke="#777"/><rect x="9" y="7" width="14" height="6" fill="#b6c8da"/><path d="M0 10l4-3v2h4v2H4v2z" fill="#3f82c8"/></svg><span class="k">삽입</span><svg class="ch" width="10" height="7"><use href="#chev"/></svg></div>
          <div class="crow"><svg width="24" height="23" viewBox="0 0 24 23"><path d="M0 0h15v6H0zM0 14h15v9H0z" fill="#e6e6e6"/><path d="M7.500 0v6M7.500 14v9M0 18h15" stroke="#777"/><rect x="5" y="7" width="9" height="6" fill="#b6c8da"/><path d="M11 3l11 11M22 3L11 14" stroke="#c8402a" stroke-width="2"/></svg><span class="k">삭제</span><svg class="ch" width="10" height="7"><use href="#chev"/></svg></div>
          <div class="crow"><svg width="24" height="26" viewBox="0 0 24 26"><path d="M2 2h20M2 0v4M22 0v4M5 0l-3 2 3 2M19 0l3 2-3 2" fill="none" stroke="#3f82c8"/><rect y="6" width="24" height="17" fill="#e6e6e6"/><rect x="8" y="8" width="8" height="10" fill="#2e7cc8"/><path d="M6 6v17M18 6v17M0 12h24M0 18h24" stroke="#777"/></svg><span class="k">서식</span><svg class="ch2" width="10" height="7"><use href="#chev"/></svg></div>
        </div>
      </div>
      <div class="rc k"><span>셀</span></div>
    </div>

    <div class="rg g-edit">
      <div class="rb pl12">
        <div class="edcol">
          <div class="edr"><svg width="18" height="20" viewBox="0 0 18 20"><path d="M17 5V1H1l8 9-8 9h16v-4" fill="none" stroke="#dcdcdc" stroke-width="2"/></svg><svg class="ms-2" width="10" height="7"><use href="#chev"/></svg></div>
          <div class="edr"><svg width="21" height="23" viewBox="0 0 21 23"><rect width="21" height="23" fill="#f0f0f0"/><rect width="21" height="4" fill="#8a8a8a"/><path d="M10.500 7v11M6 13l4.500 5 4.500-5" fill="none" stroke="#2e7cc8" stroke-width="2.400"/></svg><svg width="10" height="7"><use href="#chev"/></svg></div>
          <div class="edr"><svg width="21" height="21" viewBox="0 0 21 21"><path d="M14 0l7 6-9 13-7-1-5-4z" fill="#e0718a"/><path d="M0 14l5-5 7 6-4 5-3 1z" fill="#c85f76"/></svg><svg width="10" height="7"><use href="#chev"/></svg></div>
        </div>
        <div class="big c67">
          <div class="ic"><svg width="44" height="32" viewBox="0 0 44 32"><path d="M1 2h16v10" fill="none" stroke="#3f82c8" stroke-width="2.500"/><path d="M9 14v4" stroke="#8e62b8" stroke-width="2.500"/><path d="M1 20h17" stroke="#8e62b8" stroke-width="2"/><ellipse cx="9" cy="26" rx="6" ry="4" fill="none" stroke="#8e62b8" stroke-width="2.500"/><path d="M19 6h24l-9 13v12h-5V19z" fill="#9c9c9c"/></svg></div>
          <div class="k">정렬 및</div><div class="k">필터<svg width="9" height="7"><use href="#chev"/></svg></div>
        </div>
        <div class="big c67">
          <div class="ic"><svg width="42" height="42" viewBox="0 0 42 42"><path d="M16 26L4 39" stroke="#3b7cc4" stroke-width="5" stroke-linecap="round"/><circle cx="26" cy="16" r="14" fill="#ececec" stroke="#3b7cc4" stroke-width="3.500"/></svg></div>
          <div class="k">찾기 및</div><div class="k">선택<svg width="9" height="7"><use href="#chev"/></svg></div>
        </div>
      </div>
      <div class="rc k"><span>편집</span></div>
    </div>

    <div class="rg g-add">
      <div class="rb justify-content-center">
        <div class="big">
          <div class="ic"><svg width="18" height="18"><circle cx="9" cy="9" r="8" fill="#e88400" opacity=".45"/><circle cx="9" cy="9" r="5.800" fill="#f08a00"/></svg></div>
          <div class="k">추가</div><div class="k">기능</div>
        </div>
      </div>
      <div class="rc k"><span>추가 기능</span></div>
    </div>

    <div class="rg g-acr">
      <div class="rb justify-content-center">
        <div class="big">
          <div class="ic"><svg width="38" height="44" viewBox="0 0 38 44"><path d="M16 38H3a2 2 0 0 1-2-2V3a2 2 0 0 1 2-2h19l7 7v12" fill="none" stroke="#2a66c0" stroke-width="1.800"/><path d="M6 24c4-2 7-7 8-13 1 7 4 11 9 12-5 0-10 1-14 3" fill="none" stroke="#2a66c0" stroke-width="1.300"/><path d="M23 32l10-10a3.500 3.500 0 0 1 3 5l-6 6M28 34l-7 7a3.500 3.500 0 0 1-3-5l6-7" fill="none" stroke="#2a66c0" stroke-width="2"/></svg></div>
          <div class="k">PDF</div><div class="k">만들기</div>
        </div>
      </div>
      <div class="rc lat"><span>Adobe Acrobat</span></div>
    </div>
    <div class="col-fill"><svg width="15" height="9" viewBox="0 0 15 9"><path d="M1 8l6.500-6.500L14 8" fill="none" stroke="#cfcfcf" stroke-width="1.300"/></svg></div>
  </div>

  <div class="fbar">
    <div class="namebox"><span>N37</span><svg width="9" height="5"><use href="#caret"/></svg></div>
    <div class="vdots"><svg width="4" height="17"><path d="M2 0v3M2 7v3M2 14v3" stroke="#fff" stroke-width="2.500"/></svg></div>
    <div class="fxbox">
      <svg width="16" height="16"><path d="M1 1l14 14M15 1L1 15" stroke="#6a6a6a" stroke-width="2.500"/></svg>
      <svg width="20" height="16"><path d="M1 9l6 6L18 1" fill="none" stroke="#6a6a6a" stroke-width="3"/></svg>
      <span class="fx">fx</span>
    </div>
    <div class="finput"><svg width="11" height="9" class="text-white"><use href="#chev"/></svg></div>
  </div>

  <div class="sarea">
    <div class="sheetwrap">
      <table class="sheet" id="sheet"></table>
      <div class="canvas">
        <div class="chart">
          <svg width="682" height="553" viewBox="634 464 682 553">
            <g stroke="#d9d9d9" stroke-width="1.800" fill="none">
              <path d="M701 486h584M701 532h584M701 579h584M701 625h584M701 671h584M701 718h584M701 764h584M701 810h584M701 857h584M701 949h584"/>
              <path d="M701 486v463M774 486v463M847 486v463M920 486v463M993 486v463M1066 486v463M1139 486v463M1212 486v463M1285 486v463"/>
            </g>
            <path d="M701 903h584" stroke="#bfbfbf" stroke-width="1.800"/>
            <g font-size="16" fill="#595959" text-anchor="end">
              <text x="684" y="491">0.45</text><text x="684" y="537">0.4</text><text x="684" y="584">0.35</text><text x="684" y="630">0.3</text><text x="684" y="676">0.25</text><text x="684" y="723">0.2</text><text x="684" y="769">0.15</text><text x="684" y="815">0.1</text><text x="684" y="862">0.05</text><text x="684" y="908">0</text><text x="684" y="954">-0.05</text>
            </g>
            <g font-size="16" fill="#595959" text-anchor="middle">
              <text x="701" y="931">0</text><text x="774" y="931">2</text><text x="847" y="931">4</text><text x="920" y="931">6</text><text x="993" y="931">8</text><text x="1066" y="931">10</text><text x="1139" y="931">12</text><text x="1212" y="931">14</text><text x="1285" y="931">16</text>
            </g>
            <polyline fill="none" stroke="#5b9bd5" stroke-width="2.800" stroke-linejoin="round" points="701,902.500 745,902.500 752,902 760,902 766,902.500 781,902.500 788,902 795,902.500 803,902 810,902.500 839,902.500 846,902 853,902.500 883,902 890,902.500 905,902 912,902 919,902.500 941,902 948,902.500 1000,902.500 1007,902 1014,902.500 1022,902 1029,902 1036,902.500 1044,902 1051.400,842 1058.700,891 1066,882 1073.300,861.400 1080.600,794 1087.900,690.500 1095.200,601 1102.500,628 1109.800,548 1117.100,550 1124.400,751 1131.700,526.600 1139,656.400 1146.300,654.600 1153.600,631 1160.900,899.500 1168.200,595.800 1175.500,881.700 1182.800,901.300 1190,902.500 1197,902 1204,902 1212,902.500 1219,903"/>
            <path d="M701 903.500h518" stroke="#ed7d31" stroke-width="3"/>
            <path d="M898 988h41" stroke="#5b9bd5" stroke-width="3"/><text x="942" y="993" font-size="16" fill="#595959">(V)</text>
            <path d="M978 988h40" stroke="#ed7d31" stroke-width="3"/><text x="1021" y="993" font-size="16" fill="#595959">(mA)</text>
          </svg>
        </div>
        <div class="lbl l-serial">Serial port</div>
        <div class="combo c-com"><span>COM7</span><i><svg width="11" height="6" style="color:#999"><use href="#caret"/></svg></i></div>
        <button class="btn xb sm b-scan off" type="button">Port scan</button>
        <button class="btn xb lg off b-open" type="button">Port OPEN</button>
        <button class="btn xb lg b-read" type="button">Read sensor</button>
        <button class="btn xb lg b-set" type="button">Set methods</button>
        <button class="btn xb lg b-start" type="button">Start Collect</button>
        <div class="lbl l-int">Interval</div><div class="lbl l-evt">Event</div>
        <div class="combo c-int"><span>0.2</span><i><svg width="11" height="6" class="text-black"><use href="#caret"/></svg></i></div>
        <div class="combo c-evt"><span>T1</span><i><svg width="11" height="6" class="text-black"><use href="#caret"/></svg></i></div>
        <label class="ck ck-rec form-check-label"><input type="checkbox" class="form-check-input" checked>Record</label>
        <label class="ck ck-auto form-check-label"><input type="checkbox" class="form-check-input">Auto backup</label>
        <button class="btn xb sm addc r1" type="button">Add CH[A]</button><button class="btn xb sm calc r1" type="button">Calibration [A]</button>
        <button class="btn xb sm addc r2" type="button">Add CH[B]</button><button class="btn xb sm calc r2" type="button">Calibration [B]</button>
        <button class="btn xb sm addc r3" type="button">Add CH[C]</button><button class="btn xb sm calc r3" type="button">Calibration [C]</button>
        <button class="btn xb sm addc r4" type="button">Add CH[D]</button><button class="btn xb sm calc r4" type="button">Calibration [D]</button>
        <button class="btn xb lg off b-stop" type="button">Stop Collect</button>
        <button class="btn xb lg b-close" type="button">Port CLOSE</button>
        <div class="selbox"></div>
      </div>
    </div>
    <div class="vscroll">
      <div class="vb"><svg width="11" height="6" viewBox="0 0 10 6"><path d="M0 6h10L5 0z" fill="#fff"/></svg></div>
      <div class="vthumb"></div>
      <div class="vsp"></div>
      <div class="vb"><svg width="11" height="6" viewBox="0 0 10 6"><path d="M0 0h10L5 6z" fill="#fff"/></svg></div>
    </div>
  </div>

  <div class="tabbar">
    <div class="tnav"><svg width="7" height="14"><path d="M7 0v14L0 7z" fill="#9a9a9a"/></svg><svg width="7" height="14"><path d="M0 0v14l7-7z" fill="#9a9a9a"/></svg></div>
    <div class="stab">Sheet1</div>
    <div class="stab2">2025-08-22 17-38</div>
    <svg class="plus" width="23" height="23"><circle cx="11.500" cy="11.500" r="10.500" fill="none" stroke="#f0f0f0" stroke-width="1.300"/><path d="M11.500 6v11M6 11.500h11" stroke="#f0f0f0" stroke-width="1.500"/></svg>
    <svg class="tdots" width="4" height="15"><path d="M2 0v3M2 6v3M2 12v3" stroke="#fff" stroke-width="2.500"/></svg>
    <div class="hsc">
      <div class="hb"><svg width="6" height="12"><path d="M6 0v12L0 6z" fill="#fff"/></svg></div>
      <div class="hthumb"></div><div class="hblack"></div>
      <div class="hb"><svg width="6" height="12"><path d="M0 0v12l6-6z" fill="#fff"/></svg></div>
    </div>
  </div>

  <div class="status">
    <div class="st-l">
      <span class="k">준비</span>
      <svg class="mac" width="20" height="24" viewBox="0 0 20 24"><rect x="0" y="1" width="10" height="9" fill="#e6e6e6"/><circle cx="14" cy="5" r="5" fill="#e6e6e6"/><rect x="1" y="10" width="18" height="13" fill="#262626" stroke="#e6e6e6"/><path d="M4 14h12M4 17h12M4 20h12" stroke="#e6e6e6" stroke-dasharray="2 1"/></svg>
      <svg width="20" height="24" viewBox="0 0 20 24"><path d="M10 3a9 9 0 1 0 0 18" fill="none" stroke="#e6e6e6" stroke-dasharray="3 2" stroke-width="1.500"/><path d="M8 7l10 15M18 7L8 22" stroke="#f0f0f0" stroke-width="1.800"/></svg>
      <span class="acc">접근성: 조사 필요</span>
    </div>
    <div class="st-r">
      <div class="vbtn on"><svg width="20" height="19"><path d="M.5.5h19v18H.5zM.5 6.500h19M.5 12.500h19M7 .5v18M13 .5v18" fill="none" stroke="#fff"/></svg></div>
      <div class="vbtn"><svg width="18" height="19"><path d="M.5.5h17v18H.5z" fill="none" stroke="#fff"/><path d="M5.500 3.500h7v12h-7zM7.500 7h3M7.500 10h3M7.500 13h3" fill="none" stroke="#fff"/></svg></div>
      <div class="vbtn"><svg width="18" height="19"><path d="M.5.5h17v18H.5z" fill="none" stroke="#fff"/><rect width="5" height="12" x="1" y="1" fill="#fff"/><rect width="5" height="12" x="8" y="1" fill="#fff"/></svg></div>
      <div class="zoom">
        <svg class="ms-2" width="12" height="2"><path d="M0 1h12" stroke="#ddd" stroke-width="1.500"/></svg>
        <div class="zline"></div>
        <svg width="12" height="14"><path d="M0 7h12M6 0v14" stroke="#ddd" stroke-width="1.300"/></svg>
        <div class="zpct">100%</div>
      </div>
    </div>
  </div>
</div>

<script src="https://cdn.jsdelivr.net/npm/bootstrap@5.3.0/dist/js/bootstrap.bundle.min.js"></script>
<script>
(function(){
  var V="0.0004 0 0.0002 0.0004 0.0004 0 0.0018 0.0012 0.0006 0 0.0002 0.002 0.0008 0.0012 0.0002 0 0.0006 0 0 0.002 0 0.0008 0 0.0014 0 0.0006 0.0014 0 0.001 0 0 0 0 0.002 0 0.0006 0 0 0.0004 0".split(" ");
  var A="2 1 2 1 1 1 1 1 1 1 2 2 1 1 0 2 3 2 2 2 2 2 2 2 2 2 1 2 2 1 2 2 1 2 1 1 2 2 2 1".split(" ");
  var cols="A B C D E F G H I J K L M N O P Q R S T U".split(" ");
  var html='<colgroup><col style="width:40px">';
  cols.forEach(function(c){html+='<col style="width:'+(c==="R"?37:99)+'px">';});
  html+='</colgroup><thead><tr><th><svg width="22" height="22" class="d-block ms-auto me-1 mb-1"><path d="M22 0v22H0z" fill="#6a6a6a"/></svg></th>';
  cols.forEach(function(c){html+='<th'+(c==="N"?' class="sel"':'')+'>'+c+'</th>';});
  html+='</tr></thead><tbody>';
  function rest(from){var s='';for(var i=from;i<21;i++)s+='<td></td>';return s;}
  html+='<tr class="h33"><th>1</th><td class="l" colspan="2">SP=0.2;EV=1;PR=7</td><td class="c y">[A]</td><td class="c y">[B]</td><td class="c y">[C]</td><td class="c y">[D]</td>'+rest(6)+'</tr>';
  html+='<tr class="h33"><th>2</th><td></td><td></td><td class="c g">Voltage</td><td class="c g">Current</td><td class="g"></td><td class="g"></td>'+rest(6)+'</tr>';
  html+='<tr class="h33"><th>3</th><td class="big3">72</td><td class="big3">14.2</td><td class="big3">0</td><td class="big3">-0.0003</td><td></td><td></td>'+rest(6)+'</tr>';
  html+='<tr class="h25"><th>4</th><td class="c g">No</td><td class="c g">Time</td><td class="c g">(V)</td><td class="c g">(mA)</td><td class="g"></td><td class="g"></td>'+rest(6)+'</tr>';
  for(var i=0;i<40;i++){
    var t=(i*0.2).toFixed(1).replace(/\.0$/,'');
    var a=A[i]==="0"?"0":"-0.000"+A[i];
    var n=i+5;
    html+='<tr class="h24"><th'+(n===37?' class="sel"':'')+'>'+n+'</th><td>'+(i+1)+'</td><td>'+t+'</td><td>'+V[i]+'</td><td>'+a+'</td>'+rest(4)+'</tr>';
  }
  html+='</tbody>';
  document.getElementById('sheet').innerHTML=html;
})();
</script>
</body>
</html>
